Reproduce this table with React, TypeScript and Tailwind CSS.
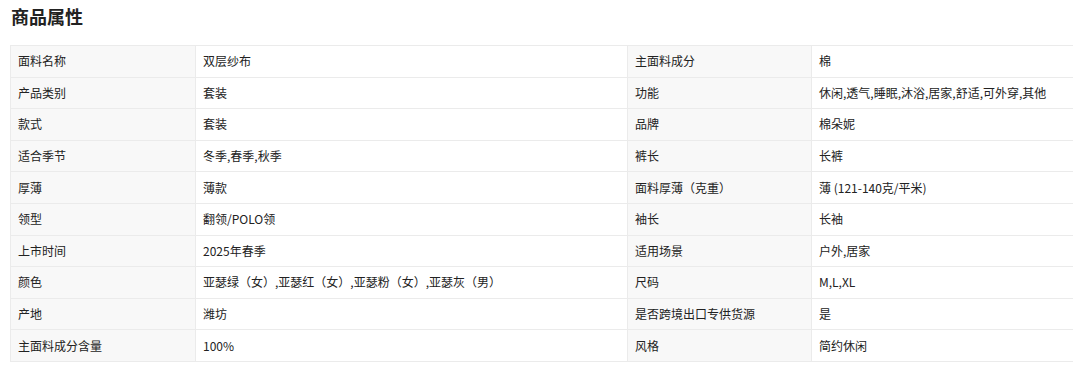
const rows: [string, string, string, string][] = [
  ['面料名称', '双层纱布', '主面料成分', '棉'],
  ['产品类别', '套装', '功能', '休闲,透气,睡眠,沐浴,居家,舒适,可外穿,其他'],
  ['款式', '套装', '品牌', '棉朵妮'],
  ['适合季节', '冬季,春季,秋季', '裤长', '长裤'],
  ['厚薄', '薄款', '面料厚薄（克重）', '薄 (121-140克/平米)'],
  ['领型', '翻领/POLO领', '袖长', '长袖'],
  ['上市时间', '2025年春季', '适用场景', '户外,居家'],
  ['颜色', '亚瑟绿（女）,亚瑟红（女）,亚瑟粉（女）,亚瑟灰（男）', '尺码', 'M,L,XL'],
  ['产地', '潍坊', '是否跨境出口专供货源', '是'],
  ['主面料成分含量', '100%', '风格', '简约休闲'],
];

export default function App() {
  return (
    <div
      className="w-[1073px] h-[392px] overflow-hidden bg-white text-[#222]"
      style={{ fontFamily: '"Noto Sans CJK SC", "Noto Sans", sans-serif' }}
    >
      {/* Title */}
      <h2 className="pl-[11px] pt-[3px] h-[45px] text-[18px] font-bold leading-[26px] text-[#222]">
        商品属性
      </h2>

      {/* Attribute table */}
      <div className="pl-[10px]">
        <table className="w-[1233px] table-fixed border-collapse text-[12px]">
          <colgroup>
            <col className="w-[185px]" />
            <col className="w-[432px]" />
            <col className="w-[184px]" />
            <col className="w-[432px]" />
          </colgroup>
          <tbody>
            {rows.map(([k1, v1, k2, v2]) => (
              <tr key={k1} className="h-[31.6px]">
                <td className="border border-[#ebebeb] bg-[#f8f8f8] px-[7px] py-0 whitespace-nowrap">{k1}</td>
                <td className="border border-[#ebebeb] px-[7px] py-0 whitespace-nowrap">{v1}</td>
                <td className="border border-[#ebebeb] bg-[#f8f8f8] px-[7px] py-0 whitespace-nowrap">{k2}</td>
                <td className="border border-[#ebebeb] px-[7px] py-0 whitespace-nowrap">{v2}</td>
              </tr>
            ))}
          </tbody>
        </table>
      </div>
    </div>
  );
}
